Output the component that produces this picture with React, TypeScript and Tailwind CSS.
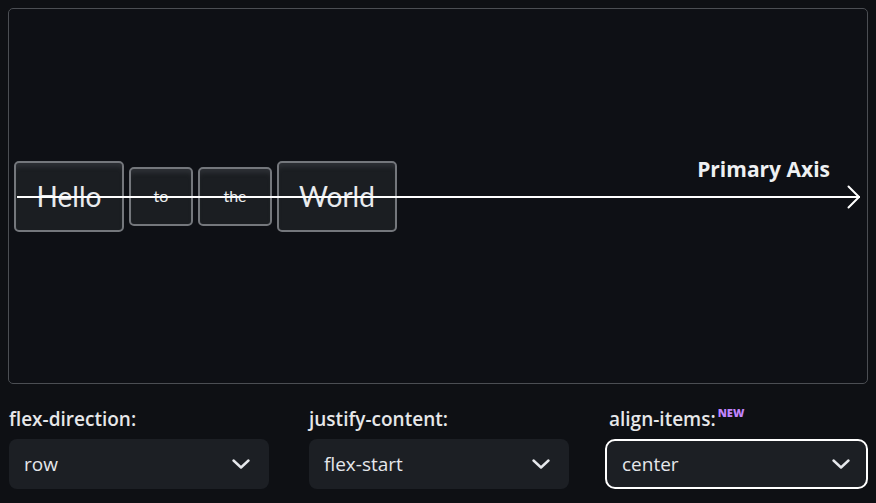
import { ReactNode } from 'react';

const boxFont = { fontFamily: 'Lato, "Noto Sans", sans-serif' };
const uiFont = { fontFamily: '"Open Sans", "Noto Sans", sans-serif' };

function Box({ children, big }: { children: ReactNode; big?: boolean }) {
  return (
    <div
      className={`flex items-center justify-center rounded-[5px] border-2 border-[#74777c] bg-[#1b1e22] shadow-[inset_0_6px_4px_-2px_#2c2f34] text-[#e8eaed] ${
        big ? 'h-[71px] text-[28px]' : 'h-[59px] text-[16px]'
      }`}
      style={boxFont}
    >
      {children}
    </div>
  );
}

function Chevron() {
  return (
    <svg width="18" height="10" viewBox="0 0 18 10" fill="none">
      <path d="M1.5 1.5 L9 8.5 L16.5 1.5" stroke="#e5e7eb" strokeWidth="2.4" strokeLinecap="round" strokeLinejoin="round" />
    </svg>
  );
}

function Control({ label, value, active, isNew }: { label: string; value: string; active?: boolean; isNew?: boolean }) {
  return (
    <div className="flex flex-col">
      <div className="flex items-start h-[22px] text-[19px] font-semibold text-[#e6e7e9] leading-[22px] pl-[1px]">
        <span>{label}</span>
        {isNew && <span className="ml-[2px] -mt-[2px] text-[11px] font-extrabold text-[#c084fc] leading-[14px]">NEW</span>}
      </div>
      <div
        className={`mt-[9px] flex h-[50px] items-center justify-between bg-[#1c1f24] pl-[15px] text-[19px] text-[#e5e7eb] ${
          active ? 'border-2 border-white rounded-[10px] -ml-[3px] pr-[16px]' : 'rounded-lg ml-[1px] mr-[-1px] pr-[19px]'
        }`}
      >
        <span>{value}</span>
        <Chevron />
      </div>
    </div>
  );
}

export default function App() {
  return (
    <div className="min-h-screen w-[876px] h-[503px] bg-[#0e1014] p-2 overflow-hidden" style={uiFont}>
      <div className="relative flex h-[376px] items-center gap-[5px] rounded-[5px] border border-[#4b4e53] bg-[#0e1015] px-[5px]">
        <div className="w-[110px]"><Box big>Hello</Box></div>
        <div className="w-[64px]"><Box>to</Box></div>
        <div className="w-[74px]"><Box>the</Box></div>
        <div className="w-[120px]"><Box big>World</Box></div>

        {/* primary axis overlay */}
        <div className="absolute left-[8px] right-[6px] top-[177px] h-[22px] flex items-center">
          <div className="h-[2px] flex-1 bg-white" />
          <svg width="14" height="24" viewBox="0 0 14 24" fill="none" className="-ml-[13px]">
            <path d="M1.5 1.5 L12 12 L1.5 22.5" stroke="white" strokeWidth="2" strokeLinecap="round" strokeLinejoin="round" />
          </svg>
        </div>
        <div className="absolute right-[37px] top-[145px] text-[21px] font-bold text-[#eef0f2] leading-[30px]">Primary Axis</div>
      </div>

      <div className="mt-[24px] grid grid-cols-3 gap-x-[40px]">
        <Control label="flex-direction:" value="row" />
        <Control label="justify-content:" value="flex-start" />
        <Control label="align-items:" value="center" active isNew />
      </div>
    </div>
  );
}
